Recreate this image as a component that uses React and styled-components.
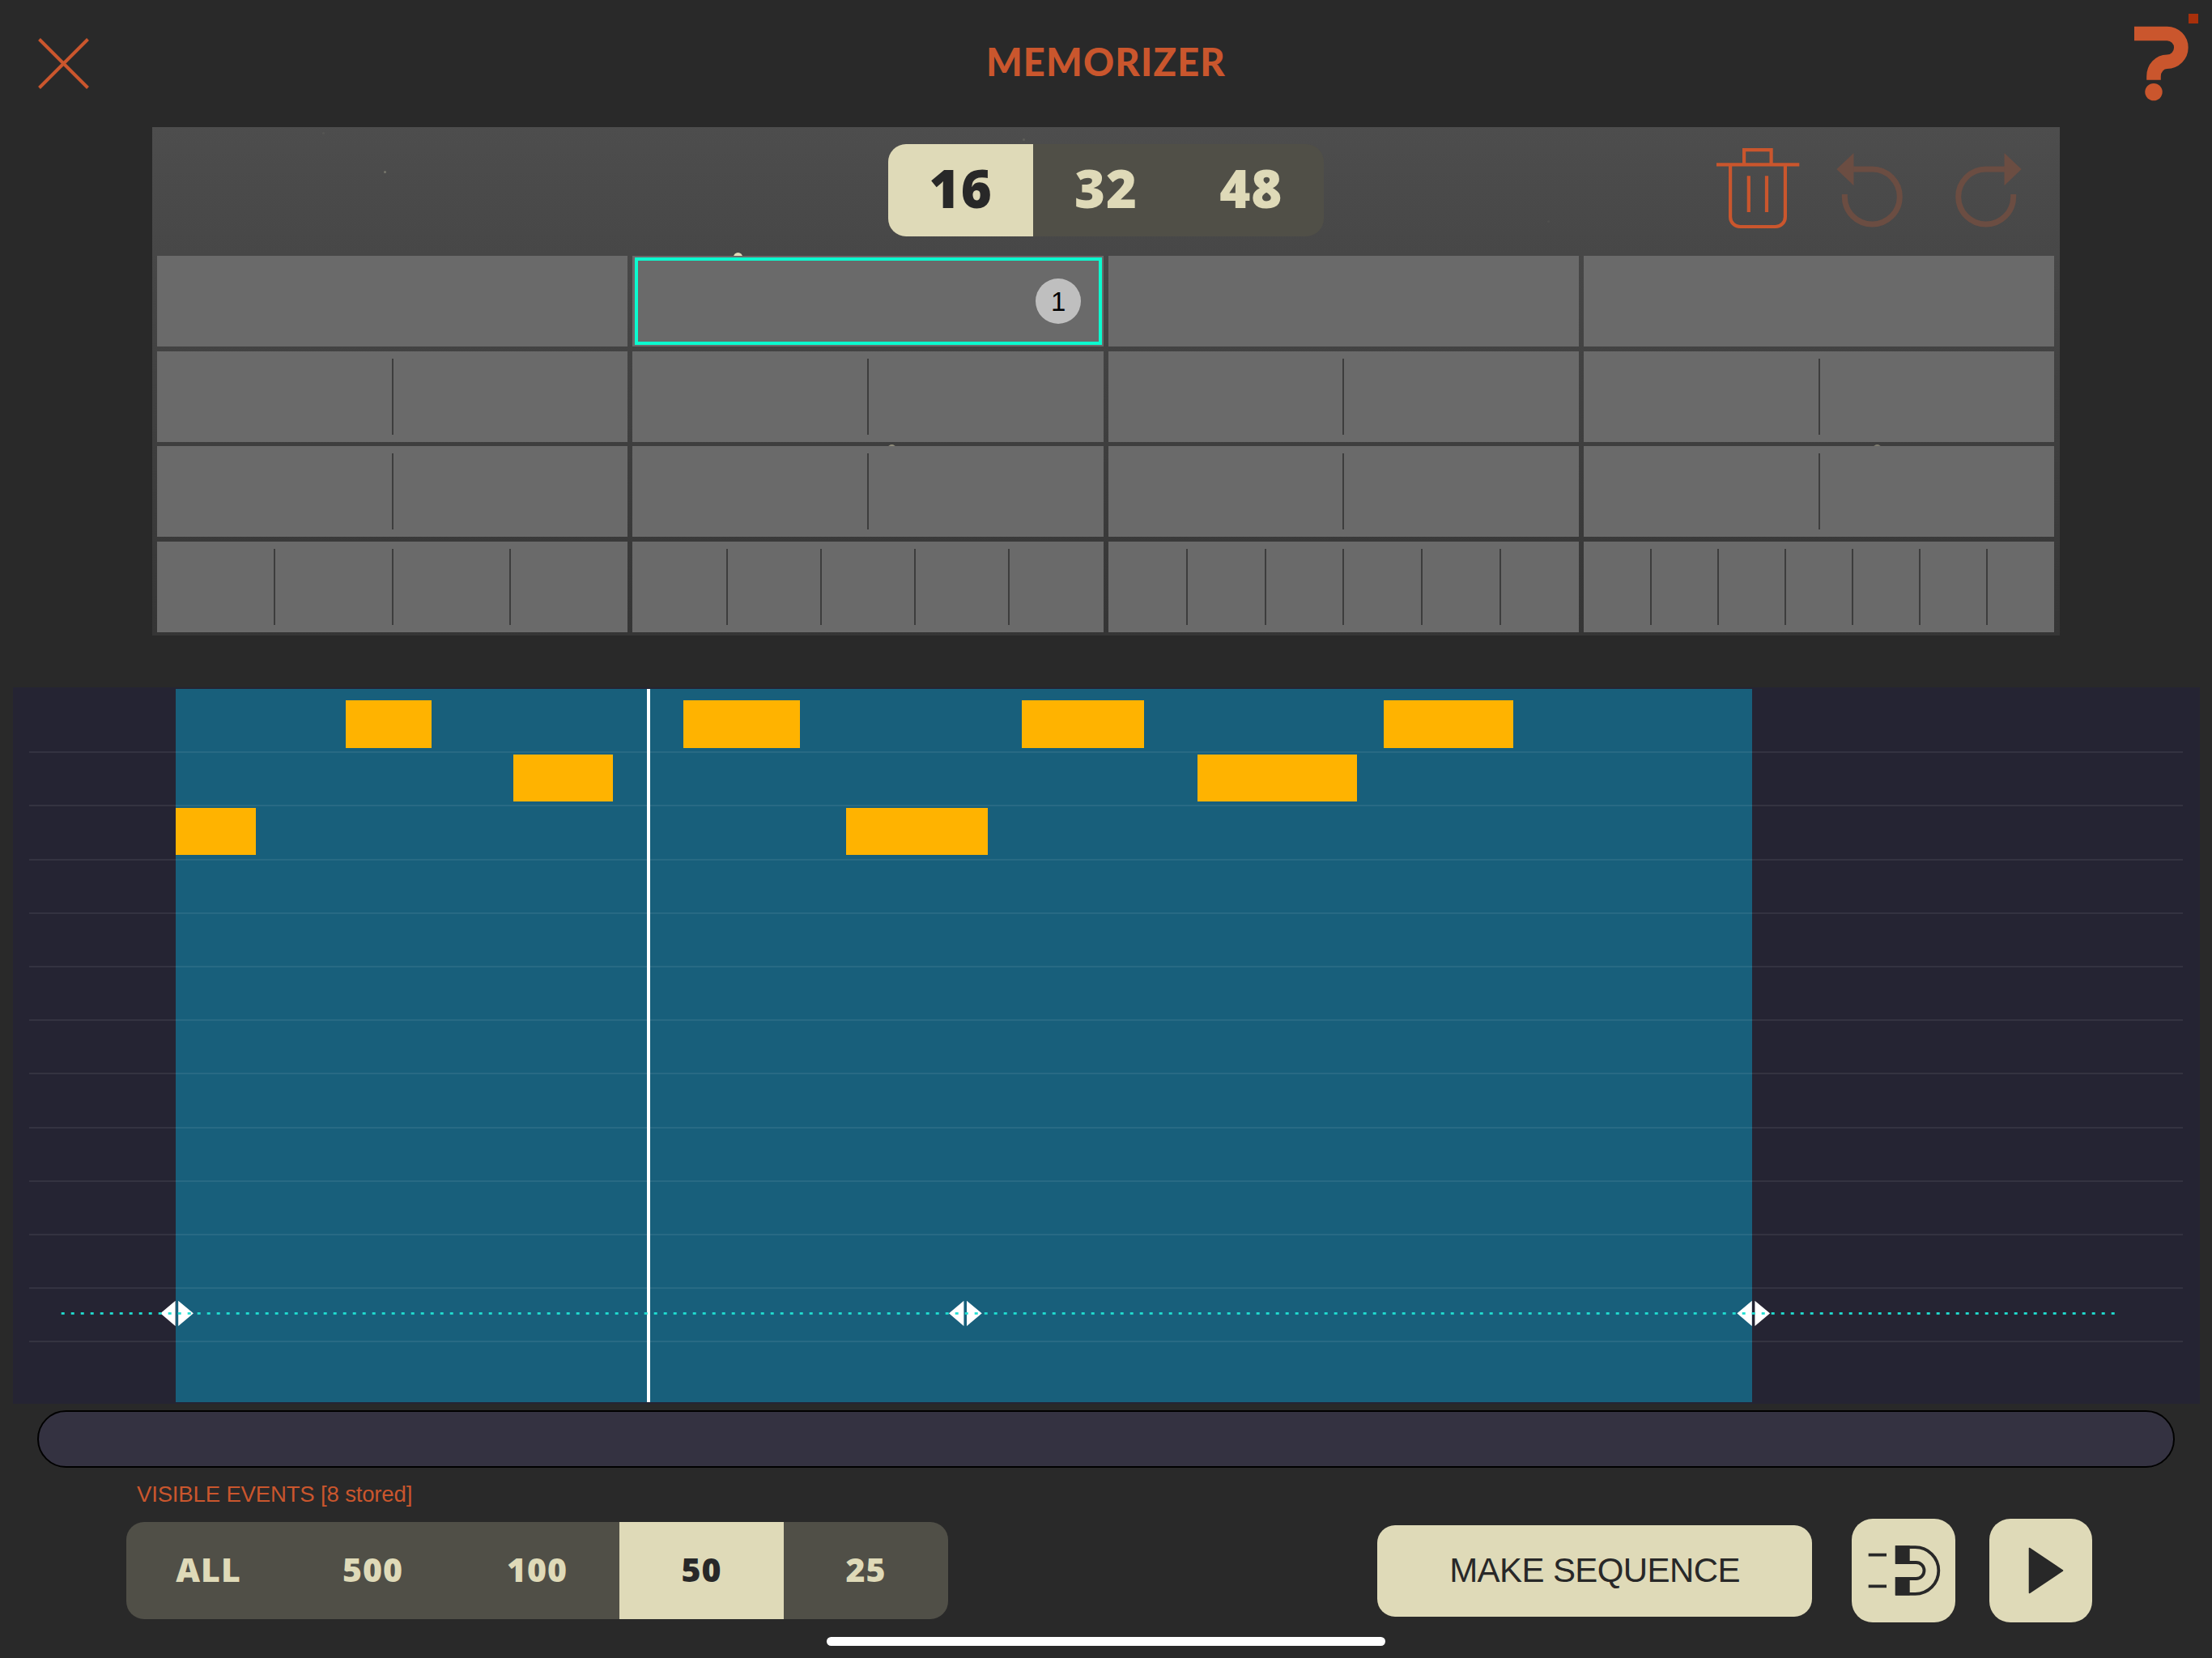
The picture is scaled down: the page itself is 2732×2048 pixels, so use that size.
import { useState } from 'react'
import styled, { createGlobalStyle } from 'styled-components'

const orange = '#ca562d'
const cream = '#dfdab8'
const ink = '#282828'

const GlobalStyle = createGlobalStyle`
  * {
    box-sizing: border-box;
  }
  body {
    margin: 0;
    background: #292929;
    font-family: 'Liberation Sans', Arial, sans-serif;
  }
  button {
    border: 0;
    padding: 0;
    background: none;
    font: inherit;
    color: inherit;
    cursor: pointer;
  }
  svg {
    display: block;
  }
`

const Page = styled.div`
  width: 2732px;
  height: 2048px;
  display: flex;
  flex-direction: column;
  overflow: hidden;
  background: #292929;
`

const Header = styled.header`
  height: 157px;
  flex-shrink: 0;
  display: grid;
  grid-template-columns: 1fr auto 1fr;
  align-items: start;
`
const CloseButton = styled.button`
  justify-self: start;
  margin: 46px 0 0 46px;
`
const HelpButton = styled.button`
  justify-self: end;
  margin-right: 16px;
`
const Title = styled.h1`
  margin: 43px 0 0;
  color: ${orange};
  font-family: Lato, sans-serif;
  font-weight: 900;
  font-size: 47px;
  line-height: 66px;
  letter-spacing: 1.2px;
`

const Bank = styled.section`
  position: relative;
  width: 2356px;
  height: 628px;
  flex-shrink: 0;
  margin-left: 188px;
  background: linear-gradient(#4d4d4d, #353535);
`
const Toolbar = styled.div`
  height: 159px;
  display: grid;
  grid-template-columns: 1fr auto 1fr;
  align-items: start;
  padding-top: 21px;
`
const Tools = styled.div`
  grid-column: 3;
  justify-self: end;
  display: flex;
  gap: 44px;
  margin: 4px 46px 0 0;
`
const History = styled.div`
  display: flex;
  gap: 63px;
  color: #6b4d42;
`

const Segments = styled.div`
  grid-column: 2;
  display: flex;
  height: ${(props) => props.$height}px;
  border-radius: 22px;
  overflow: hidden;
  background: #504f47;
`
const Segment = styled.button`
  width: ${(props) => props.$width}px;
  padding-bottom: ${(props) => props.$lift || 0}px;
  font-family: 'Open Sans', sans-serif;
  font-weight: 800;
  font-size: ${(props) => props.$size}px;
  letter-spacing: 1px;
  background: ${(props) => (props.$active ? cream : 'transparent')};
  color: ${(props) => (props.$active ? ink : cream)};
`

const Slots = styled.div`
  position: relative;
  display: grid;
  grid-template-columns: repeat(4, 1fr);
  grid-auto-rows: 112px;
  gap: 5.67px 6.2px;
  padding: 0 6.6px 0 6px;
`
const Slot = styled.div`
  position: relative;
  display: grid;
  grid-template-columns: repeat(${(props) => props.$parts}, 1fr);
  padding: 9px 0;
  background: #6a6a6a;
`
const Part = styled.div`
  & + & {
    margin-left: -1px;
    border-left: 2px solid #3d3d3d;
  }
`
const Selection = styled.div`
  position: absolute;
  inset: 2px 2px 2px 2.5px;
  display: flex;
  justify-content: flex-end;
  align-items: center;
  padding-right: 21.5px;
  border: 4px solid #0bfbcf;
`
const Badge = styled.span`
  width: 56px;
  height: 56px;
  border-radius: 50%;
  background: #bfbfbf;
  color: #000;
  font-size: 33px;
  line-height: 57px;
  text-align: center;
`
const Spark = styled.i`
  position: absolute;
  width: ${(props) => props.$size}px;
  height: ${(props) => props.$size}px;
  border-radius: 50%;
  background: ${cream};
`

const Roll = styled.section`
  position: relative;
  height: 885px;
  flex-shrink: 0;
  margin: 64px 15px 0 16px;
  padding: 15px 21px 0 20px;
  background: #252433;
`
const Range = styled.div`
  position: absolute;
  top: 2px;
  bottom: 2px;
  background: #185f7b;
`
const Lane = styled.div`
  position: relative;
  height: 66.2px;
  border-bottom: 2px solid rgba(255, 255, 255, 0.07);
`
const Note = styled.div`
  position: absolute;
  height: 58.6px;
  background: #ffb300;
`
const Playhead = styled.div`
  position: absolute;
  top: 2px;
  bottom: 2px;
  width: 4px;
  background: #fff;
`
const Handles = styled.svg`
  position: absolute;
  left: 0;
  top: 753px;
`

const ScrollTrack = styled.div`
  height: 71px;
  flex-shrink: 0;
  margin: 8px 46px 0;
  border: 2.5px solid #000;
  border-radius: 36px;
  background: #343241;
`

const Footer = styled.footer`
  height: 209px;
  display: flex;
  justify-content: space-between;
  padding: 0 148px 0 156px;
`
const EventsLabel = styled.div`
  height: 67px;
  padding: 17px 0 0 13px;
  color: ${orange};
  font-size: 27.5px;
  line-height: 32px;
  letter-spacing: -0.15px;
`
const Actions = styled.div`
  display: flex;
  align-items: center;
  height: 128px;
  margin-top: 63px;
`
const SequenceButton = styled.button`
  width: 537px;
  height: 113px;
  margin-right: 49px;
  border-radius: 22px;
  background: ${cream};
  color: ${ink};
  font-size: 42px;
  letter-spacing: -0.6px;
`
const SquareButton = styled.button`
  width: 127.5px;
  height: 128px;
  margin-left: ${(props) => props.$gap || 0}px;
  border-radius: 26px;
  background: ${cream};
  color: ${ink};
`
const HomeBar = styled.div`
  width: 690px;
  height: 11px;
  flex-shrink: 0;
  margin: 0 auto 15px;
  border-radius: 6px;
  background: #fff;
`

const slotRows = [
  [1, 1, 1, 1],
  [2, 2, 2, 2],
  [2, 2, 2, 2],
  [4, 5, 6, 7],
]

const notes = [
  { lane: 2, start: 216.5, end: 315.7 },
  { lane: 0, start: 426.5, end: 532.5 },
  { lane: 1, start: 634, end: 756.8 },
  { lane: 0, start: 844.4, end: 988.4 },
  { lane: 2, start: 1044.5, end: 1220.3 },
  { lane: 0, start: 1262, end: 1413.4 },
  { lane: 1, start: 1479.4, end: 1676 },
  { lane: 0, start: 1708.5, end: 1869.4 },
]

const sparks = [
  { x: 906, y: 312, size: 11, opacity: 1 },
  { x: 1097, y: 549, size: 9, opacity: 0.5 },
  { x: 2314, y: 549, size: 9, opacity: 0.4 },
  { x: 474, y: 211, size: 3, opacity: 0.3 },
  { x: 398, y: 163, size: 3, opacity: 0.06 },
  { x: 1263, y: 171, size: 3, opacity: 0.12 },
  { x: 1911, y: 272, size: 3, opacity: 0.05 },
]

const rollLeft = 16
const lanes = Array.from({ length: 12 })

function CloseIcon() {
  return (
    <svg width='65' height='65' fill='none' stroke={orange} strokeWidth='4'>
      <path d='M2.5 2.5 62.5 62.5M62.5 2.5 2.5 62.5' />
    </svg>
  )
}

function HelpIcon() {
  return (
    <svg width='82' height='130' viewBox='2634 0 82 130'>
      <path
        d='M2636 41.5H2676.5a17.3 17.3 0 0 1 0 34.7a16.5 18 0 0 0 -16.5 18V98.7'
        fill='none'
        stroke={orange}
        strokeWidth='17.6'
      />
      <circle cx='2660' cy='113.6' r='10.7' fill={orange} />
      <rect x='2703' y='17' width='12' height='12' fill='#a8300b' />
    </svg>
  )
}

function TrashIcon() {
  return (
    <svg
      width='104'
      height='102'
      viewBox='19 17 104 102'
      fill='none'
      stroke={orange}
      strokeWidth='4.2'
    >
      <path d='M20 38.3H122.3M54.1 38V20.1H87.6V38' />
      <path d='M37.1 38V103a12 12 0 0 0 12 12H92.9a12 12 0 0 0 12-12V38' />
      <path d='M59.8 52.3V97M82 52.3V97' />
    </svg>
  )
}

function ArrowIcon({ flipped }) {
  return (
    <svg width='84' height='102' viewBox='167 17 84 102' fill='none'>
      <g transform={flipped ? 'matrix(-1 0 0 1 418 0)' : undefined}>
        <path
          d='M188 44H212.3a34 34 0 1 1-34 34V75'
          stroke='currentColor'
          strokeWidth='7'
        />
        <path d='M168.3 44 189.5 24V64.3Z' fill='currentColor' />
      </g>
    </svg>
  )
}

function MagnetIcon() {
  return (
    <svg width='127' height='128' fill='none' stroke='currentColor' strokeWidth='3.8'>
      <path d='M20.7 44.7H43M20.7 83.3H43' />
      <path d='M54 35.2H78.5a28.8 28.8 0 0 1 0 57.6H54' />
      <path d='M54 54H79.5a10 10 0 0 1 0 20H54' />
      <path
        d='M53.7 33.3h18v22.4h-18zM53.7 72h18v22.6h-18z'
        fill='currentColor'
        stroke='none'
      />
    </svg>
  )
}

function PlayIcon() {
  return (
    <svg width='127' height='128' fill='currentColor'>
      <path
        d='M49.5 36.5V91.5L90.5 64Z'
        stroke='currentColor'
        strokeWidth='1.6'
        strokeLinejoin='round'
      />
    </svg>
  )
}

function SegmentGroup({ options, value, onChange, height, width, size, lift }) {
  return (
    <Segments $height={height}>
      {options.map((option) => (
        <Segment
          key={option}
          $active={option === value}
          $width={width}
          $size={size}
          $lift={lift}
          onClick={() => onChange(option)}
        >
          {option}
        </Segment>
      ))}
    </Segments>
  )
}

function SlotGrid() {
  const [selected, setSelected] = useState(1)
  return (
    <Slots>
      {slotRows.flat().map((parts, index) => (
        <Slot key={index} $parts={parts} onClick={() => setSelected(index)}>
          {parts > 1 &&
            Array.from({ length: parts }).map((_, part) => <Part key={part} />)}
          {index === selected && (
            <Selection>
              <Badge>1</Badge>
            </Selection>
          )}
        </Slot>
      ))}
    </Slots>
  )
}

function PianoRoll() {
  return (
    <Roll>
      <Range style={{ left: 216.5 - rollLeft, width: 1947.5 }} />
      {lanes.map((_, index) => (
        <Lane key={index} />
      ))}
      {notes.map((note) => (
        <Note
          key={note.start}
          style={{
            left: note.start - rollLeft,
            width: note.end - note.start,
            top: 16.2 + note.lane * 66.3,
          }}
        />
      ))}
      <Playhead style={{ left: 799.4 - rollLeft }} />
      <Handles width='2701' height='40'>
        {[202.4, 1176.2, 2149.6].map((x) => (
          <path
            key={x}
            d={`M${x - 1.8} 4.7V36L${x - 20.2} 20.3ZM${x + 1.8} 4.7V36L${x + 20.5} 20.3Z`}
            fill='#fff'
          />
        ))}
        <path
          d='M59.7 20.4H2597'
          stroke='#20dfd2'
          strokeWidth='2.6'
          strokeDasharray='4 8'
        />
      </Handles>
    </Roll>
  )
}

export default function App() {
  const [steps, setSteps] = useState('16')
  const [visible, setVisible] = useState('50')
  return (
    <Page>
      <GlobalStyle />
      <Header>
        <CloseButton>
          <CloseIcon />
        </CloseButton>
        <Title>MEMORIZER</Title>
        <HelpButton>
          <HelpIcon />
        </HelpButton>
      </Header>
      <Bank>
        {sparks.map((spark) => (
          <Spark
            key={spark.x}
            $size={spark.size}
            style={{ left: spark.x - 188, top: spark.y - 157, opacity: spark.opacity }}
          />
        ))}
        <Toolbar>
          <SegmentGroup
            options={['16', '32', '48']}
            value={steps}
            onChange={setSteps}
            height={114}
            width={179.3}
            size={65}
            lift={6}
          />
          <Tools>
            <TrashIcon />
            <History>
              <ArrowIcon />
              <ArrowIcon flipped />
            </History>
          </Tools>
        </Toolbar>
        <SlotGrid />
      </Bank>
      <PianoRoll />
      <ScrollTrack />
      <Footer>
        <div>
          <EventsLabel>VISIBLE EVENTS [8 stored]</EventsLabel>
          <SegmentGroup
            options={['ALL', '500', '100', '50', '25']}
            value={visible}
            onChange={setVisible}
            height={120}
            width={203}
            size={41}
            lift={4}
          />
        </div>
        <Actions>
          <SequenceButton>MAKE SEQUENCE</SequenceButton>
          <SquareButton>
            <MagnetIcon />
          </SquareButton>
          <SquareButton $gap={42}>
            <PlayIcon />
          </SquareButton>
        </Actions>
      </Footer>
      <HomeBar />
    </Page>
  )
}
